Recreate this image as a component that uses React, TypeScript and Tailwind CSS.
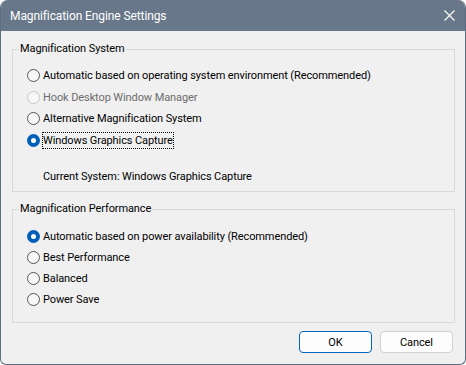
import React from "react";

const font = { fontFamily: 'Roboto, "Segoe UI", sans-serif', letterSpacing: "-0.1px" };

function Radio({ checked, disabled, label, focus, h }: { checked?: boolean; disabled?: boolean; label: string; focus?: boolean; h: string }) {
  return (
    <div className={"flex items-center " + h}>
      {checked ? (
        <span className="w-[13px] h-[13px] rounded-full bg-[#005fb8] flex items-center justify-center shrink-0">
          <span className="w-[5px] h-[5px] rounded-full bg-white" />
        </span>
      ) : (
        <span
          className={
            "w-[13px] h-[13px] rounded-full border shrink-0 bg-[#f7f7f7] " +
            (disabled ? "border-[#c8c8c8]" : "border-[#555555]")
          }
        />
      )}
      <span
        className={
          "ml-[2px] leading-[15px] " +
          (focus ? "border border-dotted border-black" : "border border-transparent") +
          (disabled ? " text-[#6d6d6d]" : " text-black")
        }
      >
        {label}
      </span>
    </div>
  );
}

export default function App() {
  return (
    <div className="w-[466px] h-[365px] bg-white text-[11px]" style={font}>
      <div className="w-full h-full rounded-t-[8px] rounded-b-[6px] border border-t-0 border-[#5f6e80] bg-[#f0f0f0] overflow-hidden flex flex-col">
        <div className="h-[31px] bg-[#687789] flex items-center justify-between pl-[9px] pr-[10px] shrink-0">
          <span className="text-white text-[12px]">Magnification Engine Settings</span>
          <svg width="11" height="11" viewBox="0 0 11 11">
            <path d="M0.5 0.5 L10.5 10.5 M10.5 0.5 L0.5 10.5" stroke="white" strokeWidth="1.1" />
          </svg>
        </div>
        <div className="flex-1 flex flex-col pl-[11px] pr-[10px] pt-[10px]">
          <fieldset className="border border-[#d9d9d9] h-[151px] shrink-0">
            <legend className="ml-[6px] px-[1px] leading-[16px]">Magnification System</legend>
            <div className="flex flex-col pt-[8px] pl-[14px]">
              <Radio h="h-[21.5px]" label="Automatic based on operating system environment (Recommended)" />
              <Radio h="h-[21.5px]" label="Hook Desktop Window Manager" disabled />
              <Radio h="h-[21.5px]" label="Alternative Magnification System" />
              <Radio h="h-[21.5px]" label="Windows Graphics Capture" checked focus />
            </div>
            <div className="pl-[30px] mt-[18px] leading-[16px]">Current System: Windows Graphics Capture</div>
          </fieldset>
          <fieldset className="border border-[#d9d9d9] h-[122px] mt-[9px] shrink-0">
            <legend className="ml-[6px] px-[1px] leading-[16px]">Magnification Performance</legend>
            <div className="flex flex-col pt-[8.5px] pl-[14px]">
              <Radio h="h-[21px]" label="Automatic based on power availability (Recommended)" checked />
              <Radio h="h-[21px]" label="Best Performance" />
              <Radio h="h-[21px]" label="Balanced" />
              <Radio h="h-[21px]" label="Power Save" />
            </div>
          </fieldset>
          <div className="flex justify-end gap-[8px] mt-[8px] pr-[2px]">
            <button className="w-[73px] h-[22px] rounded-[4px] border border-[#0067c0] bg-[#fdfdfd] text-black leading-none">OK</button>
            <button className="w-[73px] h-[22px] rounded-[4px] border border-[#d0d0d0] bg-[#fdfdfd] text-black leading-none">Cancel</button>
          </div>
        </div>
      </div>
    </div>
  );
}
